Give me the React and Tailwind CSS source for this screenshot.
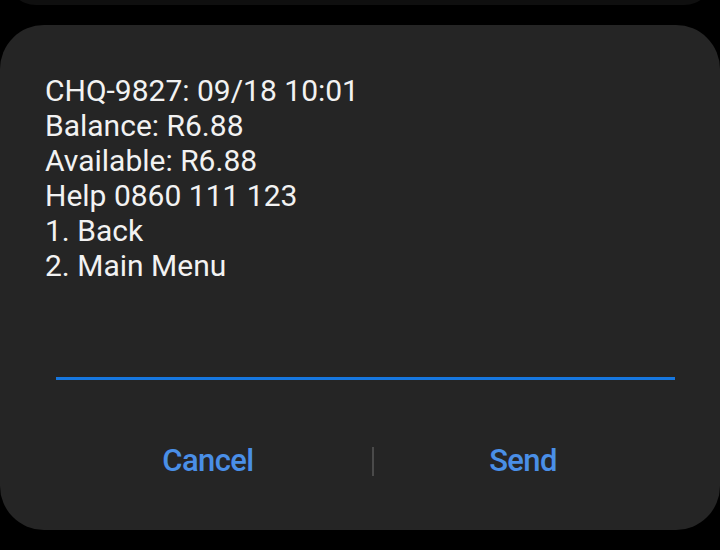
export default function App() {
  const lines = [
    'CHQ-9827: 09/18 10:01',
    'Balance: R6.88',
    'Available: R6.88',
    'Help 0860 111 123',
    '1. Back',
    '2. Main Menu',
  ]

  return (
    <div className="h-[550px] w-[720px] overflow-hidden bg-black font-['Roboto',sans-serif]">
      <div className="mx-[6px] -mt-[40px] h-[45px] rounded-b-[30px] bg-[#0f0f0f]" />
      <div className="mt-[20px] flex h-[505px] flex-col rounded-[44px] bg-[#252525]">
        <div className="pl-[45px] pt-[48px] text-[30px] leading-[35px] text-[#f2f2f2]">
          {lines.map((l) => (
            <div key={l}>{l}</div>
          ))}
        </div>
        <div className="ml-[56px] mr-[45px] mt-[94px] h-[3px] bg-[#1677e0]" />
        <div className="mt-[58px] flex items-center">
          <div className="flex w-[372px] justify-center pl-[44px] text-[31px] font-medium tracking-[-0.6px] text-[#4a8fe7]">
            Cancel
          </div>
          <div className="h-[29px] w-[2px] bg-[#4a4a4a]" />
          <div className="flex flex-1 justify-center pr-[48px] text-[31px] font-medium tracking-[-0.6px] text-[#4a8fe7]">
            Send
          </div>
        </div>
      </div>
    </div>
  )
}
